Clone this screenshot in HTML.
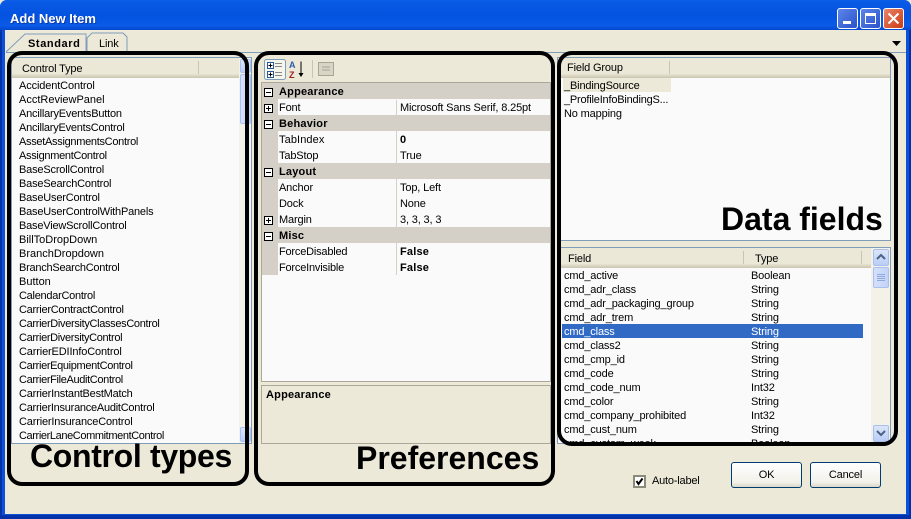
<!DOCTYPE html>
<html><head><meta charset="utf-8">
<style>
html,body{margin:0;padding:0;background:#fff}
#w{position:relative;width:911px;height:519px;overflow:hidden;font:11px/16px "Liberation Sans",sans-serif;letter-spacing:-.15px;color:#000;background:#ece9d8}
#w div{position:absolute;white-space:nowrap}
.t{height:14px}
.b{font-weight:bold;letter-spacing:.2px}
.hd{background:linear-gradient(#ebe8d8 0,#ebe8d8 78%,#d8d4c0 90%,#c9c5b0 100%)}
.sb{background:#f4f2e8}
.arrow{width:14px;height:15px;background:linear-gradient(#dbe6fb,#b9cdf6);border:1px solid #a9c0ee;border-radius:2px;box-sizing:border-box}
.thumb{background:linear-gradient(90deg,#d5e0fa,#c3d3f8);border:1px solid #a9c0ee;border-radius:2px;box-sizing:border-box}
.ring{border:4px solid #000;box-sizing:border-box;border-radius:15px}
.big{font-weight:bold;font-size:32px;line-height:36px;letter-spacing:0;color:#000}
.cat{background:#d4d0c8;left:262px;width:288px;height:16px}
.row{left:278px;width:272px;height:15px;background:#fafafa}
.pm{width:9px;height:9px;border:1px solid #000;box-sizing:border-box;background:#fff}
.pm:before{content:"";position:absolute;left:1px;top:3px;width:5px;height:1px;background:#000}
.pl:after{content:"";position:absolute;left:3px;top:1px;width:1px;height:5px;background:#000}
.btn{height:26px;border:1px solid #003c74;border-radius:3px;box-sizing:border-box;background:linear-gradient(#fff,#f2f1ea 80%,#dcd8c8);text-align:center;line-height:25px}
</style></head><body>
<div id="w">
<!-- frame -->
<div style="left:0;top:0;width:911px;height:519px;background:#0a50d8;border-radius:7px 7px 0 0"></div>
<div style="left:0;top:515px;width:911px;height:4px;background:#0331a8"></div>
<div style="left:0;top:30px;width:2px;height:489px;background:#0331a8"></div>
<div style="left:909px;top:30px;width:2px;height:489px;background:#0331a8"></div>
<div style="left:0;top:0;width:911px;height:30px;background:linear-gradient(#0a5fe8 0,#0a5ae6 8%,#0353e0 50%,#0a5ae8 85%,#0448cc 100%);border-radius:7px 7px 0 0"></div>
<div style="left:5px;top:30px;width:901px;height:484px;background:#ece9d8"></div>
<div style="left:10px;top:12px;font-weight:bold;font-size:13px;line-height:14px;letter-spacing:0;color:#fff;text-shadow:1px 1px 0 #0a3aa8">Add New Item</div>
<!-- window buttons -->
<div style="left:837px;top:8px;width:21px;height:21px;box-sizing:border-box;border:1px solid #fff;border-radius:3px;background:linear-gradient(135deg,#5d86e8,#2a52cc)"></div>
<div style="left:843px;top:21px;width:8px;height:3px;background:#fff"></div>
<div style="left:860px;top:8px;width:21px;height:21px;box-sizing:border-box;border:1px solid #fff;border-radius:3px;background:linear-gradient(135deg,#5d86e8,#2a52cc)"></div>
<div style="left:865px;top:13px;width:11px;height:11px;box-sizing:border-box;border:1px solid #fff;border-top-width:3px"></div>
<div style="left:883px;top:8px;width:21px;height:21px;box-sizing:border-box;border:1px solid #fff;border-radius:3px;background:linear-gradient(135deg,#e8866a,#cc3a12)"></div>
<svg style="position:absolute;left:883px;top:8px" width="21" height="21"><path d="M5.500 5.500L15.500 15.500M15.500 5.500L5.500 15.500" stroke="#fff" stroke-width="2"/></svg>
<!-- tabs -->
<div style="left:6px;top:52px;width:900px;height:1px;background:#7f9db9"></div>
<svg style="position:absolute;left:5px;top:31px" width="130" height="22"><path d="M1 21L20 3H81V21" fill="#ece9d8" stroke="#7f9db9"/><path d="M82 21V7L87 2H118L122 6V21" fill="#ece9d8" stroke="#7f9db9"/></svg>
<div style="left:28px;top:36px;font-weight:bold;letter-spacing:.6px">Standard</div>
<div style="left:99px;top:36px">Link</div>
<svg style="position:absolute;left:892px;top:41px" width="10" height="6"><path d="M0 0H9L4.500 5Z" fill="#000"/></svg>

<!-- left panel -->
<div style="left:11px;top:57px;width:241px;height:387px;background:#fafafa;border:1px solid #7f9db9;box-sizing:border-box"></div>
<div class="hd" style="left:12px;top:58px;width:227px;height:20px"></div>
<div style="left:198px;top:61px;width:1px;height:13px;background:#c9c5b0"></div>
<div style="left:22px;top:61px">Control Type</div>
<div class="sb" style="left:239px;top:58px;width:12px;height:385px"></div>
<div class="arrow" style="left:240px;top:59px;width:11px;height:14px"></div>
<div class="thumb" style="left:240px;top:74px;width:11px;height:50px"></div>
<div class="arrow" style="left:240px;top:427px;width:11px;height:15px"></div>
<div class="t" style="left:19px;top:78px;letter-spacing:-.13px">AccidentControl</div>
<div class="t" style="left:19px;top:92px;letter-spacing:0">AcctReviewPanel</div>
<div class="t" style="left:19px;top:106px;letter-spacing:-.2px">AncillaryEventsButton</div>
<div class="t" style="left:19px;top:120px;letter-spacing:-.23px">AncillaryEventsControl</div>
<div class="t" style="left:19px;top:134px;letter-spacing:-.3px">AssetAssignmentsControl</div>
<div class="t" style="left:19px;top:148px;letter-spacing:-.3px">AssignmentControl</div>
<div class="t" style="left:19px;top:162px;letter-spacing:-.18px">BaseScrollControl</div>
<div class="t" style="left:19px;top:176px;letter-spacing:-.18px">BaseSearchControl</div>
<div class="t" style="left:19px;top:190px;letter-spacing:-.2px">BaseUserControl</div>
<div class="t" style="left:19px;top:204px;letter-spacing:-.2px">BaseUserControlWithPanels</div>
<div class="t" style="left:19px;top:218px;letter-spacing:-.2px">BaseViewScrollControl</div>
<div class="t" style="left:19px;top:232px;letter-spacing:0">BillToDropDown</div>
<div class="t" style="left:19px;top:246px;letter-spacing:0">BranchDropdown</div>
<div class="t" style="left:19px;top:260px;letter-spacing:-.25px">BranchSearchControl</div>
<div class="t" style="left:19px;top:274px;letter-spacing:0">Button</div>
<div class="t" style="left:19px;top:288px;letter-spacing:-.27px">CalendarControl</div>
<div class="t" style="left:19px;top:302px;letter-spacing:-.27px">CarrierContractControl</div>
<div class="t" style="left:19px;top:316px;letter-spacing:-.33px">CarrierDiversityClassesControl</div>
<div class="t" style="left:19px;top:330px;letter-spacing:-.35px">CarrierDiversityControl</div>
<div class="t" style="left:19px;top:344px;letter-spacing:-.15px">CarrierEDIInfoControl</div>
<div class="t" style="left:19px;top:358px;letter-spacing:-.35px">CarrierEquipmentControl</div>
<div class="t" style="left:19px;top:372px;letter-spacing:-.35px">CarrierFileAuditControl</div>
<div class="t" style="left:19px;top:386px;letter-spacing:-.22px">CarrierInstantBestMatch</div>
<div class="t" style="left:19px;top:400px;letter-spacing:-.25px">CarrierInsuranceAuditControl</div>
<div class="t" style="left:19px;top:414px;letter-spacing:-.17px">CarrierInsuranceControl</div>
<div class="t" style="left:19px;top:428px;letter-spacing:-.39px">CarrierLaneCommitmentControl</div>
<div class="ring" style="left:7px;top:51px;width:242px;height:435px"></div>
<div class="big" style="left:30px;top:438px;letter-spacing:-.33px">Control types</div>

<!-- middle panel -->
<div style="left:261px;top:82px;width:290px;height:300px;background:#fafafa;border:1px solid #aca899;box-sizing:border-box"></div>
<svg style="position:absolute;left:263px;top:58px" width="80" height="22">
<rect x="1.500" y="1.500" width="21" height="20" rx="2" fill="#f4f6ec" stroke="#7f9db9"/>
<rect x="4.500" y="4.500" width="6" height="6" fill="#fff" stroke="#2a5a9a"/><rect x="4.500" y="13.500" width="6" height="6" fill="#fff" stroke="#2a5a9a"/>
<path d="M5.500 7.500h4M5.500 16.500h4M7.500 5.500v4M7.500 14.500v4" stroke="#000"/>
<path d="M12 5.500h7M12 8.500h7M12 14.500h7M12 17.500h7" stroke="#888"/>
<text x="26" y="10" font-size="9" font-weight="bold" fill="#2a5ab0" font-family="Liberation Sans">A</text>
<text x="26" y="20" font-size="9" font-weight="bold" fill="#a02020" font-family="Liberation Sans">Z</text>
<path d="M38 3.500V16" stroke="#000"/><path d="M35.500 15H40.500L38 19Z" fill="#000"/>
<path d="M49.500 2V20" stroke="#c9c5b0"/>
<rect x="55.500" y="4.500" width="15" height="13" fill="#d8d5c6" stroke="#a8a594"/><path d="M59 9h8M59 12h8" stroke="#a8a594"/>
</svg>
<div class="cat" style="top:83px;width:288px"></div>
<div class="pm" style="left:264px;top:88px"></div>
<div class="b" style="left:279px;top:84px">Appearance</div>
<div style="left:262px;top:99px;width:16px;height:176px;background:#d4d0c8"></div>
<div class="row" style="top:100px"></div>
<div class="pm pl" style="left:264px;top:104px"></div>
<div style="left:279px;top:100px">Font</div>
<div style="left:400px;top:100px">Microsoft Sans Serif, 8.25pt</div>
<div class="cat" style="top:115px"></div>
<div class="pm" style="left:264px;top:120px"></div>
<div class="b" style="left:279px;top:116px">Behavior</div>
<div class="row" style="top:132px"></div>
<div style="left:279px;top:132px;letter-spacing:.1px">TabIndex</div>
<div class="b" style="left:400px;top:132px">0</div>
<div class="row" style="top:148px"></div>
<div style="left:279px;top:148px">TabStop</div>
<div style="left:400px;top:148px">True</div>
<div class="cat" style="top:163px"></div>
<div class="pm" style="left:264px;top:168px"></div>
<div class="b" style="left:279px;top:164px">Layout</div>
<div class="row" style="top:180px"></div>
<div style="left:279px;top:180px">Anchor</div>
<div style="left:400px;top:180px">Top, Left</div>
<div class="row" style="top:196px"></div>
<div style="left:279px;top:196px">Dock</div>
<div style="left:400px;top:196px">None</div>
<div class="row" style="top:212px"></div>
<div class="pm pl" style="left:264px;top:216px"></div>
<div style="left:279px;top:212px">Margin</div>
<div style="left:400px;top:212px">3, 3, 3, 3</div>
<div class="cat" style="top:227px"></div>
<div class="pm" style="left:264px;top:232px"></div>
<div class="b" style="left:279px;top:228px">Misc</div>
<div class="row" style="top:244px"></div>
<div style="left:279px;top:244px;letter-spacing:-.2px">ForceDisabled</div>
<div class="b" style="left:400px;top:244px">False</div>
<div class="row" style="top:260px"></div>
<div style="left:279px;top:260px;letter-spacing:-.2px">ForceInvisible</div>
<div class="b" style="left:400px;top:260px">False</div>
<div style="left:396px;top:100px;width:1px;height:175px;background:#d4d0c8"></div>
<div style="left:261px;top:385px;width:290px;height:59px;border:1px solid #aca899;box-sizing:border-box"></div>
<div class="b" style="left:266px;top:387px">Appearance</div>
<div class="ring" style="left:254px;top:51px;width:301px;height:435px"></div>
<div class="big" style="left:356px;top:440px">Preferences</div>

<!-- right panel -->
<div style="left:557px;top:57px;width:334px;height:184px;background:#fafafa;border:1px solid #7f9db9;box-sizing:border-box"></div>
<div class="hd" style="left:558px;top:58px;width:332px;height:20px"></div>
<div style="left:669px;top:61px;width:1px;height:13px;background:#c9c5b0"></div>
<div style="left:567px;top:60px">Field Group</div>
<div style="left:563px;top:78px;width:108px;height:14px;background:#ece9d8"></div>
<div class="t" style="left:564px;top:78px">_BindingSource</div>
<div class="t" style="left:564px;top:92px;letter-spacing:-.2px">_ProfileInfoBindingS...</div>
<div class="t" style="left:564px;top:106px">No mapping</div>
<div class="big" style="left:721px;top:201px">Data fields</div>
<div style="left:557px;top:247px;width:334px;height:197px;background:#fafafa;border:1px solid #7f9db9;box-sizing:border-box;overflow:hidden"></div>
<div class="hd" style="left:558px;top:248px;width:313px;height:20px"></div>
<div style="left:743px;top:251px;width:1px;height:13px;background:#c9c5b0"></div>
<div style="left:861px;top:251px;width:1px;height:13px;background:#c9c5b0"></div>
<div style="left:568px;top:251px">Field</div>
<div style="left:755px;top:251px">Type</div>
<div class="sb" style="left:871px;top:248px;width:19px;height:195px"></div>
<div class="arrow" style="left:873px;top:249px;width:16px;height:17px"></div>
<div class="thumb" style="left:873px;top:267px;width:16px;height:21px"></div>
<div class="arrow" style="left:873px;top:425px;width:16px;height:17px"></div>
<svg style="position:absolute;left:873px;top:249px" width="16" height="17"><path d="M4 10L8 6L12 10" fill="none" stroke="#4d6185" stroke-width="2"/></svg>
<svg style="position:absolute;left:873px;top:267px" width="16" height="21"><path d="M4 7.500h8M4 9.500h8M4 11.500h8M4 13.500h8" stroke="#8ea8e0"/></svg>
<svg style="position:absolute;left:873px;top:425px" width="16" height="17"><path d="M4 6L8 10L12 6" fill="none" stroke="#4d6185" stroke-width="2"/></svg>
<div style="left:562px;top:324px;width:301px;height:14px;background:#316ac5"></div>
<div class="t" style="left:564px;top:268px">cmd_active</div><div class="t" style="left:751px;top:268px">Boolean</div>
<div class="t" style="left:564px;top:282px">cmd_adr_class</div><div class="t" style="left:751px;top:282px">String</div>
<div class="t" style="left:564px;top:296px">cmd_adr_packaging_group</div><div class="t" style="left:751px;top:296px">String</div>
<div class="t" style="left:564px;top:310px">cmd_adr_trem</div><div class="t" style="left:751px;top:310px">String</div>
<div class="t" style="left:564px;top:324px;color:#fff">cmd_class</div><div class="t" style="left:751px;top:324px;color:#fff">String</div>
<div class="t" style="left:564px;top:338px">cmd_class2</div><div class="t" style="left:751px;top:338px">String</div>
<div class="t" style="left:564px;top:352px">cmd_cmp_id</div><div class="t" style="left:751px;top:352px">String</div>
<div class="t" style="left:564px;top:366px">cmd_code</div><div class="t" style="left:751px;top:366px">String</div>
<div class="t" style="left:564px;top:380px">cmd_code_num</div><div class="t" style="left:751px;top:380px">Int32</div>
<div class="t" style="left:564px;top:394px">cmd_color</div><div class="t" style="left:751px;top:394px">String</div>
<div class="t" style="left:564px;top:408px;letter-spacing:-.18px">cmd_company_prohibited</div><div class="t" style="left:751px;top:408px">Int32</div>
<div class="t" style="left:564px;top:422px">cmd_cust_num</div><div class="t" style="left:751px;top:422px">String</div>
<div class="t" style="left:564px;top:436px;height:6px;overflow:hidden">cmd_custom_week</div><div class="t" style="left:751px;top:436px;height:6px;overflow:hidden">Boolean</div>
<div class="ring" style="left:557px;top:51px;width:341px;height:395px"></div>
<div style="left:561px;top:240px;width:330px;height:1px;background:#7f9db9"></div>

<!-- footer -->
<div style="left:633px;top:475px;width:13px;height:13px;border:2px solid #8c8a78;box-sizing:border-box;background:#fff"></div>
<svg style="position:absolute;left:633px;top:475px" width="13" height="13"><path d="M3.500 6L5.500 9L9.500 3.500" fill="none" stroke="#000" stroke-width="2"/></svg>
<div style="left:652px;top:473px;letter-spacing:-.2px">Auto-label</div>
<div class="btn" style="left:731px;top:462px;width:71px">OK</div>
<div class="btn" style="left:810px;top:462px;width:71px">Cancel</div>
</div>
</body></html>
